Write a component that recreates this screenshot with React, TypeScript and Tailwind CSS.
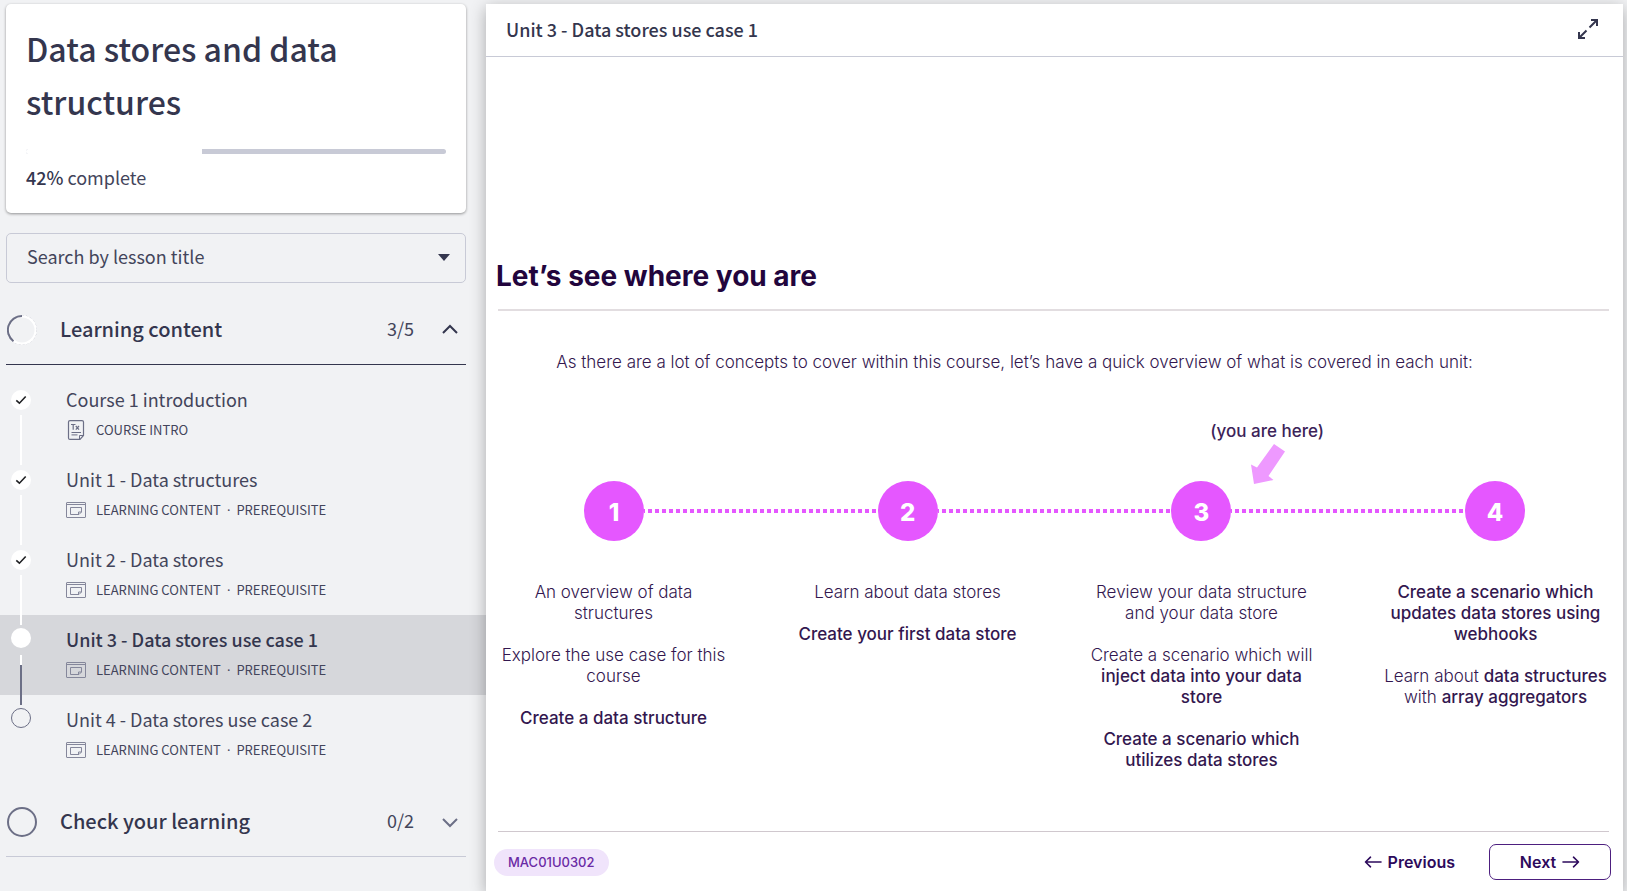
import React from "react";

type Status = "done" | "current" | "todo";

interface Lesson {
  title: string;
  tags: string[];
  status: Status;
  icon: "text" | "slides";
}

const unitTags = ["LEARNING CONTENT", "PREREQUISITE"];

const lessons: Lesson[] = [
  { title: "Course 1 introduction", tags: ["COURSE INTRO"], status: "done", icon: "text" },
  { title: "Unit 1 - Data structures", tags: unitTags, status: "done", icon: "slides" },
  { title: "Unit 2 - Data stores", tags: unitTags, status: "done", icon: "slides" },
  { title: "Unit 3 - Data stores use case 1", tags: unitTags, status: "current", icon: "slides" },
  { title: "Unit 4 - Data stores use case 2", tags: unitTags, status: "todo", icon: "slides" },
];

function TextDocIcon() {
  return (
    <svg className="h-5 w-5" viewBox="0 0 20 20" fill="none" stroke="#6c6f86" aria-hidden="true">
      <path d="M4 .6h12a1.500 1.500 0 0 1 1.500 1.500V15.500L14 19.400H4a1.500 1.500 0 0 1-1.500-1.500V2.100A1.500 1.500 0 0 1 4 .6z" strokeWidth="1.200" />
      <path d="M13.500 19.400V15.500h4" />
      <path d="M5 4.500h4.500M7.200 4.500v5.200M9.800 6l3.200 3.700M13 6 9.800 9.700" strokeWidth="1.200" />
      <path d="M5.500 12.500h9.500M5.500 14.900h6" />
    </svg>
  );
}

function SlidesIcon() {
  return (
    <svg className="h-4 w-5" viewBox="0 0 20 16" fill="none" stroke="#85879b" aria-hidden="true">
      <rect x=".5" y=".5" width="19" height="15" rx=".5" />
      <path d="M.5 2.500h19" />
      <path d="M4.500 5.500h11v4.500L13 12.500H4.500z" />
      <path d="M12.500 12.500V10h3" />
    </svg>
  );
}

function StatusMark({ status }: { status: Status }) {
  if (status === "done") {
    return (
      <span className="flex h-5 w-5 items-center justify-center rounded-full bg-white">
        <svg className="h-3 w-3" viewBox="0 0 12 12" fill="none" stroke="#1f2023" strokeWidth="1.600" aria-hidden="true">
          <path d="M1.300 6.300 4.400 9.200 10.700 2.500" />
        </svg>
      </span>
    );
  }
  if (status === "current") return <span className="block h-5 w-5 rounded-full bg-white" />;
  return <span className="block h-5 w-5 rounded-full border border-[#6c6f86]" />;
}

function LessonRow({ lesson, last }: { lesson: Lesson; last: boolean }) {
  const current = lesson.status === "current";
  const done = lesson.status === "done";
  return (
    <li className={current ? "relative bg-[#d6d7db]" : "relative"}>
      <a
        href="#lesson"
        aria-current={current ? "page" : undefined}
        className="flex h-20 gap-[35px] pl-[11px] pt-3"
      >
        <span className={done ? "pt-[3px]" : "pt-px"}>
          <StatusMark status={lesson.status} />
        </span>
        <span className="flex flex-col gap-[9px]">
          <span className={current ? "text-[18px] leading-6 font-medium" : "text-[18px] leading-6 text-[#43455b]"}>
            {lesson.title}
          </span>
          <span className="flex h-5 items-center gap-[10px] text-[13px] leading-5 text-[#43455b]">
            {lesson.icon === "text" ? <TextDocIcon /> : <SlidesIcon />}
            <span className="flex gap-[6px]">
              {lesson.tags.map((tag, i) => (
                <React.Fragment key={tag}>
                  {i > 0 && <span className="font-['Noto_Sans',sans-serif]">·</span>}
                  <span>{tag}</span>
                </React.Fragment>
              ))}
            </span>
          </span>
        </span>
      </a>
      {!last && (
        <span
          className={
            current
              ? "absolute left-5 top-10 z-10 h-[50px] w-0.5 bg-[linear-gradient(#fff_10px,#6c6f86_10px)]"
              : "absolute left-5 top-10 z-10 h-[50px] w-0.5 bg-white"
          }
        />
      )}
    </li>
  );
}

function Sidebar() {
  return (
    <aside className="w-[486px] shrink-0 pt-1 font-['Noto_Sans_CJK_SC',sans-serif] text-[#34364e]">
      <section className="ml-[6px] mr-5 rounded-[5px] bg-white px-5 pt-[18px] pb-[22px] shadow-[0_1px_3px_rgba(0,0,0,0.4)]">
        <h1 className="text-[32px] leading-[53px] font-medium">Data stores and data structures</h1>
        <div
          role="progressbar"
          aria-label="Course progress"
          aria-valuenow={42}
          className="mt-[21px] h-[5px] overflow-hidden rounded-full bg-[#c8cad6]"
        >
          <div className="h-full bg-white" style={{ width: "42%" }} />
        </div>
        <p className="mt-[9px] text-[18px] leading-7 text-[#43455b]">
          <span className="font-medium text-[#34364e]">42%</span> complete
        </p>
      </section>

      <div className="relative ml-[6px] mr-5 mt-5">
        <select
          aria-label="Search by lesson title"
          className="h-[50px] w-full appearance-none rounded-[5px] border border-[#c8cad6] bg-transparent px-5 pb-[3px] text-[18px] text-[#43455b]"
        >
          <option>Search by lesson title</option>
        </select>
        <svg className="pointer-events-none absolute right-[16px] top-[21px] h-[7px] w-3" viewBox="0 0 12 7" fill="#34364e" aria-hidden="true">
          <path d="M0 0h12L6 7z" />
        </svg>
      </div>

      <button
        type="button"
        aria-expanded="true"
        className="ml-[6px] mt-[12px] flex h-[70px] w-[460px] items-center border-b border-[#34364e] px-px text-left"
      >
        <svg className="h-[30px] w-[30px]" viewBox="0 0 30 30" fill="none" aria-hidden="true">
          <circle cx="15" cy="15" r="14.500" stroke="#a9abbb" strokeDasharray="2 2" strokeWidth=".8" />
          <circle cx="15" cy="15" r="13.600" stroke="#fff" strokeWidth="2.200" />
          <path d="M15 1A14 14 0 0 0 6.500 26.200" stroke="#6c6f86" strokeWidth="2" />
        </svg>
        <span className="ml-[23px] flex-1 pb-0.5 text-[20px] font-medium">Learning content</span>
        <span className="pb-0.5 text-[18px] text-[#43455b]">3/5</span>
        <svg className="ml-7 mr-[7px] h-4 w-4" viewBox="0 0 16 16" fill="none" stroke="#34364e" strokeWidth="2" aria-hidden="true">
          <path d="M1 11 8 4l7 7" />
        </svg>
      </button>

      <ol className="mt-[10px]">
        {lessons.map((l, i) => (
          <LessonRow key={l.title} lesson={l} last={i === lessons.length - 1} />
        ))}
      </ol>

      <button
        type="button"
        aria-expanded="false"
        className="ml-[6px] mt-[12px] flex h-[70px] w-[460px] items-center border-b border-[#c8cad6] px-px text-left"
      >
        <svg className="h-[30px] w-[30px]" viewBox="0 0 30 30" fill="none" stroke="#6c6f86" strokeWidth="2" aria-hidden="true">
          <circle cx="15" cy="15" r="14" />
        </svg>
        <span className="ml-[23px] flex-1 pb-0.5 text-[20px] font-medium">Check your learning</span>
        <span className="pb-0.5 text-[18px] text-[#43455b]">0/2</span>
        <svg className="ml-7 mr-[7px] h-4 w-4" viewBox="0 0 16 16" fill="none" stroke="#6c6f86" strokeWidth="2" aria-hidden="true">
          <path d="M1 5l7 7 7-7" />
        </svg>
      </button>
    </aside>
  );
}

const steps: React.ReactNode[][] = [
  ["An overview of data structures", "Explore the use case for this course", <b>Create a data structure</b>],
  ["Learn about data stores", <b>Create your first data store</b>],
  [
    "Review your data structure and your data store",
    <>Create a scenario which will <b>inject data into your data store</b></>,
    <b>Create a scenario which utilizes data stores</b>,
  ],
  [
    <b>Create a scenario which updates data stores using webhooks</b>,
    <>Learn about <b>data structures</b> with <b>array aggregators</b></>,
  ],
];

function Timeline() {
  return (
    <div className="flex items-center px-[90px]">
      {steps.map((_, i) => (
        <React.Fragment key={i}>
          {i > 0 && (
            <span className="h-1 flex-1 bg-[repeating-linear-gradient(to_right,#e557ff_0_1px,transparent_1px_4px,#e557ff_4px_7px)]" />
          )}
          <span className="relative flex h-[60px] w-[60px] shrink-0 items-center justify-center rounded-full bg-[#e557ff] pt-1 text-[24px] font-extrabold text-white">
            {i + 1}
            {i === 2 && (
              <span className="absolute bottom-[57px] left-[39px] flex flex-col">
                <span className="whitespace-nowrap text-[17px] leading-[21px] font-medium text-[#3c2359]">
                  (you are here)
                </span>
                <svg className="ml-[41px] mt-[2px] h-10 w-[34px]" viewBox="0 0 34 40" fill="#ee99ff" aria-hidden="true">
                  <path d="M23 0 34 7.500 17.500 32 22.500 36 3 40 0 20.500 6 23.500z" />
                </svg>
              </span>
            )}
          </span>
        </React.Fragment>
      ))}
    </div>
  );
}

function ArrowIcon({ back }: { back?: boolean }) {
  return (
    <svg className="h-4 w-[18px]" viewBox="0 0 18 16" fill="none" stroke="currentColor" strokeWidth="1.600" strokeLinecap="round" strokeLinejoin="round" aria-hidden="true">
      <path d={back ? "M17 8H1.500M6.500 3.200 1.500 8l5 4.800" : "M1 8h15.500M11.500 3.200l5 4.800-5 4.800"} />
    </svg>
  );
}

export default function App() {
  return (
    <div className="flex min-h-screen bg-[#f1f2f4]">
      <Sidebar />
      <main className="relative z-20 mr-1 mt-1 flex min-w-0 flex-1 flex-col bg-white shadow-[0_4px_15px_rgba(0,0,0,0.3)]">
        <header className="flex h-[53px] items-center justify-between border-b border-[#c8cad6] pb-[3px] pl-5 pr-[25px] font-['Noto_Sans_CJK_SC',sans-serif] text-[#34364e]">
          <h2 className="text-[18px] leading-6 font-medium">Unit 3 - Data stores use case 1</h2>
          <button type="button" aria-label="Full screen">
            <svg className="h-5 w-5" viewBox="0 0 20 20" fill="none" stroke="#34364e" strokeWidth="2" aria-hidden="true">
              <path d="M13 1h6v6M19 1l-7.500 7.500M1 13v6h6M1 19l7.500-7.500" />
            </svg>
          </button>
        </header>

        <article className="flex-1 px-2 pt-[195px] font-['Inter',sans-serif] text-[#33174f] [&_b]:font-medium">
          <h3 className="pl-[2px] text-[28px] leading-[48px] font-bold text-[#22053d]">Let’s see where you are</h3>
          <hr className="ml-1 mr-[6px] mt-[9px] border-t-2 border-[#e2dde0]" />
          <p className="mt-[41px] pr-20 text-center text-[17px] leading-[21px] font-light">
            As there are a lot of concepts to cover within this course, let’s have a quick overview of what is covered in each unit:
          </p>
          <div className="mt-[108px]">
            <Timeline />
          </div>
          <div className="mt-[41px] grid grid-cols-4 gap-x-[55px] text-center text-[17px] leading-[21px] font-light">
            {steps.map((items, i) => (
              <div key={i} className="flex flex-col gap-[21px]">
                {items.map((item, j) => (
                  <p key={j}>{item}</p>
                ))}
              </div>
            ))}
          </div>
        </article>

        <footer className="flex flex-col px-2 pb-[11px] font-['Inter',sans-serif]">
          <hr className="ml-1 mr-[6px] border-[#d0c8ce]" />
          <div className="flex items-center justify-between pr-1 pt-3">
            <span className="rounded-full bg-[#f0e4fb] px-[14px] text-[13px] leading-[27px] font-medium text-[#6a2aa5]">
              MAC01U0302
            </span>
            <div className="flex items-center gap-[34px] text-[16px] font-semibold text-[#2d0a5c]">
              <button type="button" className="flex items-center gap-[6px]">
                <ArrowIcon back />
                Previous
              </button>
              <button type="button" className="flex h-9 w-[122px] items-center justify-center gap-[6px] rounded-[7px] border border-[#4d1f7f]">
                Next
                <ArrowIcon />
              </button>
            </div>
          </div>
        </footer>
      </main>
    </div>
  );
}
